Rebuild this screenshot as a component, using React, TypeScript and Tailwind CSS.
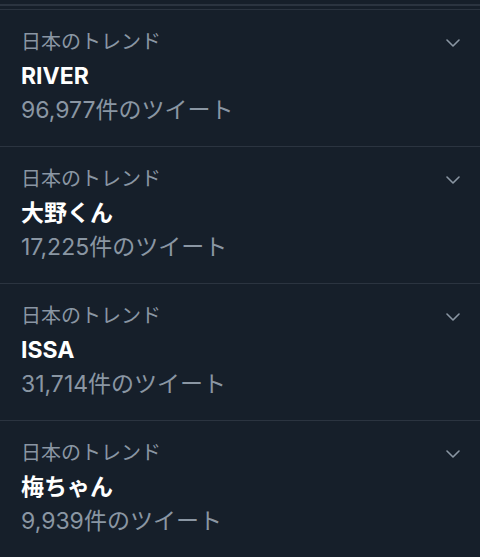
import React from "react";

const trends = [
  { title: "RIVER", count: "96,977" },
  { title: "大野くん", count: "17,225" },
  { title: "ISSA", count: "31,714" },
  { title: "梅ちゃん", count: "9,939" },
];

const font = { fontFamily: '"Inter", "Noto Sans CJK JP", sans-serif' };

function Chevron() {
  return (
    <svg width="14" height="8" viewBox="0 0 14 8" className="mt-[14px]">
      <path d="M1 1 L7 7 L13 1" fill="none" stroke="#8a96a3" strokeWidth="1.6" strokeLinecap="round" strokeLinejoin="round" />
    </svg>
  );
}

export default function App() {
  return (
    <div className="w-[480px] h-[557px] overflow-hidden bg-[#161f2a]" style={font}>
      <div className="h-[4px]" />
      <div className="h-[2px] bg-[#2b3440]" />
      <div className="h-[3px]" />
      {trends.map((t, i) => (
        <div key={i} className="border-t border-[#2b3440]">
          <div className="flex pl-[21px] pr-[20px] pt-[15px] pb-[19px]">
            <div className="flex-1 flex flex-col">
              <div className="h-[34px] flex items-center text-[20px] text-[#8a96a3]">日本のトレンド</div>
              <div className="h-[34px] flex items-center text-[23px] font-bold text-white">{t.title}</div>
              <div className="h-[34px] flex items-center text-[23px] text-[#8a96a3]">{t.count}件のツイート</div>
            </div>
            <Chevron />
          </div>
        </div>
      ))}
    </div>
  );
}
